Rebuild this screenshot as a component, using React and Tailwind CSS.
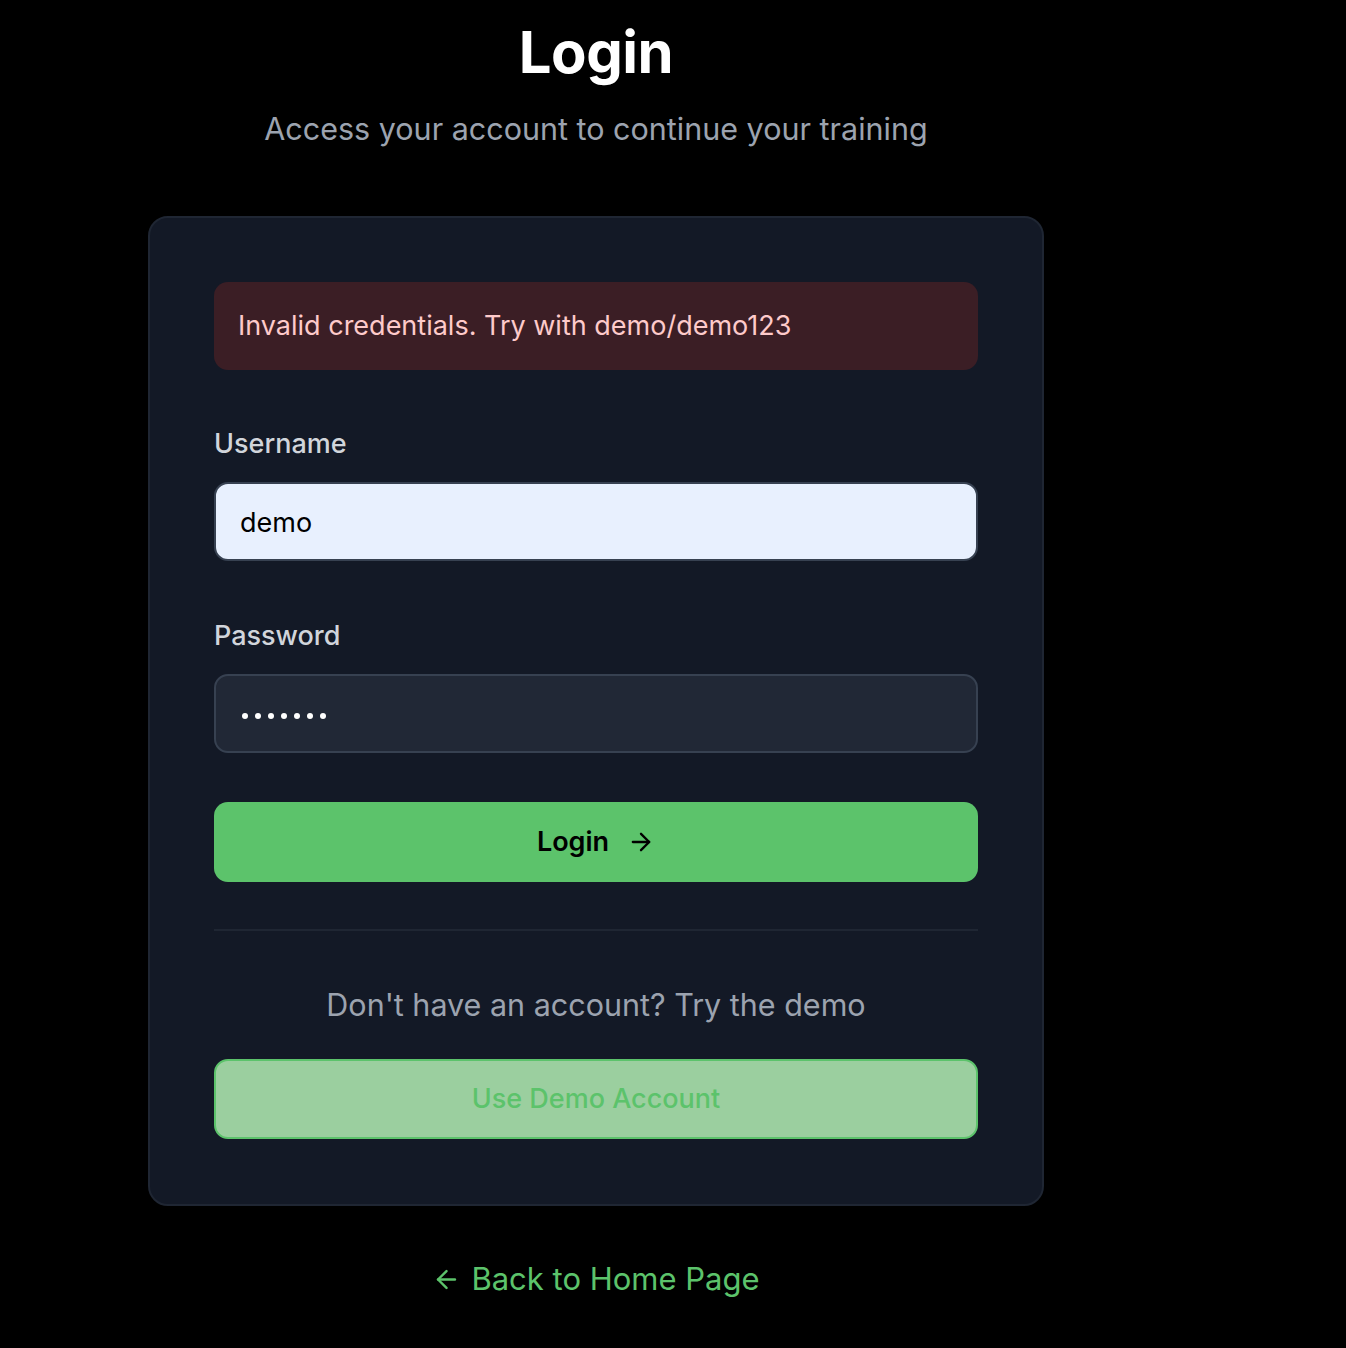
import React from "react";

export default function App() {
  return (
    <div className="min-h-[1348px] w-full bg-black" style={{ fontFamily: "Inter, 'Noto Sans', sans-serif" }}>
      <div className="flex w-[1192px] flex-col items-center pt-[20px]">
        <h1 className="text-[58px] font-bold leading-[64px] tracking-[-0.5px] text-white">Login</h1>
        <p className="mt-[25px] text-[30.5px] leading-[40px] text-[#9ca3af]">Access your account to continue your training</p>

        <div className="mt-[67px] w-[896px] rounded-[20px] border-2 border-[#1f2633] bg-[#131926] px-[64px] pt-[64px] pb-[65px]">
          <div className="flex h-[88px] items-center rounded-[14px] bg-[#3b1e25] px-[24px] text-[27px] text-[#fecaca]">
            Invalid credentials. Try with demo/demo123
          </div>

          <label className="mt-[54px] block text-[27px] leading-[40px] font-medium text-[#d1d5db]">Username</label>
          <div className="mt-[18px] flex h-[79px] items-center rounded-[14px] border-2 border-[#374151] bg-[#e8f0fe] px-[24px] pt-[4px] text-[27px] text-black">
            demo
          </div>

          <label className="mt-[55px] block text-[27px] leading-[40px] font-medium text-[#d1d5db]">Password</label>
          <div className="mt-[18px] flex h-[79px] items-center rounded-[14px] border-2 border-[#374151] bg-[#212836] px-[26px] pt-[5px] text-white">
            <div className="flex gap-[7px]">
              {[0, 1, 2, 3, 4, 5, 6].map((i) => (
                <span key={i} className="block h-[6px] w-[6px] rounded-full bg-white" />
              ))}
            </div>
          </div>

          <button className="mt-[49px] flex h-[80px] w-full items-center justify-center gap-[18px] rounded-[14px] bg-[#5cc36b] text-[27px] font-semibold text-black">
            <span>Login</span>
            <svg width="28" height="28" viewBox="0 0 24 24" fill="none" stroke="currentColor" strokeWidth="2" strokeLinecap="round" strokeLinejoin="round">
              <path d="M5 12h14" />
              <path d="m12 5 7 7-7 7" />
            </svg>
          </button>

          <div className="mt-[47px] h-[2px] w-full bg-[#1f2633]" />

          <p className="mt-[54px] text-center text-[30.5px] leading-[40px] text-[#9ca3af]">Don't have an account? Try the demo</p>

          <button className="mt-[34px] flex h-[80px] w-full items-center justify-center rounded-[14px] border-2 border-[#5cc36b] bg-[#9bcf9f] text-[27px] font-medium text-[#5cc36b]">
            Use Demo Account
          </button>
        </div>

        <a className="mt-[50px] flex items-center gap-[10px] text-[31px] text-[#5cc36b]">
          <svg width="29" height="29" viewBox="0 0 24 24" fill="none" stroke="currentColor" strokeWidth="2" strokeLinecap="round" strokeLinejoin="round">
            <path d="m12 19-7-7 7-7" />
            <path d="M19 12H5" />
          </svg>
          <span>Back to Home Page</span>
        </a>
      </div>
    </div>
  );
}
